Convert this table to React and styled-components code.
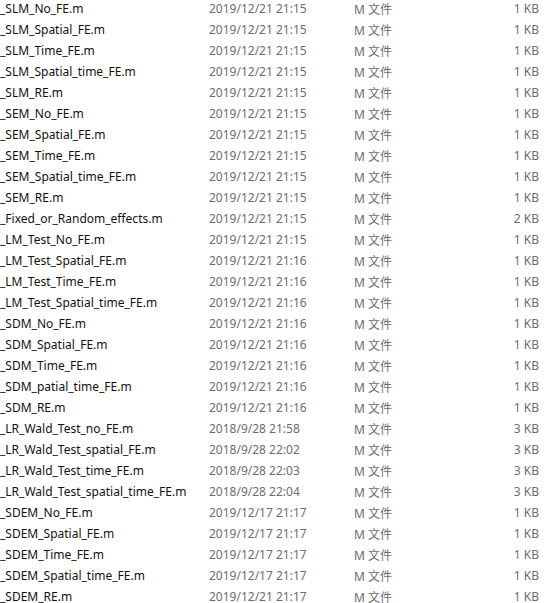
import React from "react";
import styled, { createGlobalStyle } from "styled-components";

const GlobalStyle = createGlobalStyle`
  html, body {
    margin: 0;
    padding: 0;
    background: #fff;
    overflow: hidden;
  }
`;

const List = styled.div`
  width: 551px;
  height: 603px;
  overflow: hidden;
  font-family: "Noto Sans", "Noto Sans CJK SC", sans-serif;
  font-size: 12px;
`;

const Rows = styled.div`
  margin-top: -2px;
  display: flex;
  flex-direction: column;
`;

const Row = styled.div`
  display: grid;
  grid-template-columns: 209px 145px 120px 65px;
  height: 21px;
  align-items: center;
  white-space: nowrap;
`;

const Name = styled.span`
  color: #111;
  overflow: hidden;
`;

const Cell = styled.span`
  color: #6d6d6d;
  text-align: ${(p) => (p.$right ? "right" : "left")};
`;

const files = [
  ["_SLM_No_FE.m", "2019/12/21 21:15", "1 KB"],
  ["_SLM_Spatial_FE.m", "2019/12/21 21:15", "1 KB"],
  ["_SLM_Time_FE.m", "2019/12/21 21:15", "1 KB"],
  ["_SLM_Spatial_time_FE.m", "2019/12/21 21:15", "1 KB"],
  ["_SLM_RE.m", "2019/12/21 21:15", "1 KB"],
  ["_SEM_No_FE.m", "2019/12/21 21:15", "1 KB"],
  ["_SEM_Spatial_FE.m", "2019/12/21 21:15", "1 KB"],
  ["_SEM_Time_FE.m", "2019/12/21 21:15", "1 KB"],
  ["_SEM_Spatial_time_FE.m", "2019/12/21 21:15", "1 KB"],
  ["_SEM_RE.m", "2019/12/21 21:15", "1 KB"],
  ["_Fixed_or_Random_effects.m", "2019/12/21 21:15", "2 KB"],
  ["_LM_Test_No_FE.m", "2019/12/21 21:15", "1 KB"],
  ["_LM_Test_Spatial_FE.m", "2019/12/21 21:16", "1 KB"],
  ["_LM_Test_Time_FE.m", "2019/12/21 21:16", "1 KB"],
  ["_LM_Test_Spatial_time_FE.m", "2019/12/21 21:16", "1 KB"],
  ["_SDM_No_FE.m", "2019/12/21 21:16", "1 KB"],
  ["_SDM_Spatial_FE.m", "2019/12/21 21:16", "1 KB"],
  ["_SDM_Time_FE.m", "2019/12/21 21:16", "1 KB"],
  ["_SDM_patial_time_FE.m", "2019/12/21 21:16", "1 KB"],
  ["_SDM_RE.m", "2019/12/21 21:16", "1 KB"],
  ["_LR_Wald_Test_no_FE.m", "2018/9/28 21:58", "3 KB"],
  ["_LR_Wald_Test_spatial_FE.m", "2018/9/28 22:02", "3 KB"],
  ["_LR_Wald_Test_time_FE.m", "2018/9/28 22:03", "3 KB"],
  ["_LR_Wald_Test_spatial_time_FE.m", "2018/9/28 22:04", "3 KB"],
  ["_SDEM_No_FE.m", "2019/12/17 21:17", "1 KB"],
  ["_SDEM_Spatial_FE.m", "2019/12/17 21:17", "1 KB"],
  ["_SDEM_Time_FE.m", "2019/12/17 21:17", "1 KB"],
  ["_SDEM_Spatial_time_FE.m", "2019/12/17 21:17", "1 KB"],
  ["_SDEM_RE.m", "2019/12/21 21:17", "1 KB"],
];

export default function App() {
  return (
    <>
      <GlobalStyle />
      <List>
        <Rows>
          {files.map(([name, date, size]) => (
            <Row key={name}>
              <Name>{name}</Name>
              <Cell>{date}</Cell>
              <Cell>M 文件</Cell>
              <Cell $right>{size}</Cell>
            </Row>
          ))}
        </Rows>
      </List>
    </>
  );
}
